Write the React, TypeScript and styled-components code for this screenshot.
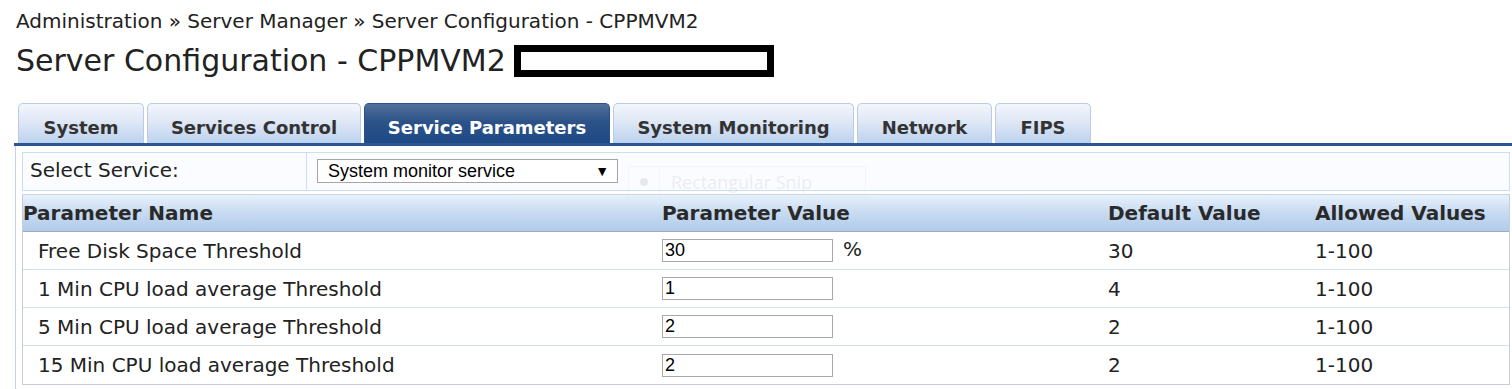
import React from "react";
import styled, { createGlobalStyle } from "styled-components";

const GlobalStyle = createGlobalStyle`
  html, body {
    margin: 0;
    padding: 0;
    background: #ffffff;
  }
  body {
    font-family: "DejaVu Sans", Verdana, sans-serif;
    color: #222222;
    overflow: hidden;
  }
`;

const Page = styled.div`
  width: 1512px;
  height: 389px;
  padding: 8px 0 0 16px;
  box-sizing: border-box;
  position: relative;
`;

const Breadcrumb = styled.div`
  font-size: 20px;
  line-height: 26px;
  color: #222;
`;

const TitleRow = styled.div`
  display: flex;
  align-items: flex-start;
  gap: 8px;
  margin-top: 9px;
  height: 36px;
`;

const Title = styled.h1`
  margin: 0;
  font-size: 30px;
  font-weight: normal;
  color: #222;
  line-height: 36px;
`;

const Redacted = styled.div`
  width: 246px;
  height: 18px;
  border: 7px solid #000;
  background: #fff;
  margin-top: 2px;
`;

const TabBar = styled.div`
  display: flex;
  gap: 3px;
  margin-top: 24px;
  margin-left: -2px;
  padding-left: 4px;
  height: 40px;
  align-items: flex-end;
  border-bottom: 3px solid #2a5592;
`;

const Tab = styled.div<{ $active?: boolean; $w: number }>`
  width: ${(p) => p.$w}px;
  height: 40px;
  box-sizing: border-box;
  border: 1px solid ${(p) => (p.$active ? "#2a5288" : "#bccbe0")};
  border-bottom: none;
  border-radius: 5px 5px 0 0;
  background: ${(p) =>
    p.$active
      ? "linear-gradient(#51719c 0%, #2c5288 45%, #1e4a86 100%)"
      : "linear-gradient(#f3f6fc 0%, #dfe8f6 45%, #bcd2ee 100%)"};
  color: ${(p) => (p.$active ? "#ffffff" : "#333333")};
  font-weight: bold;
  font-size: 18px;
  display: flex;
  align-items: flex-end;
  justify-content: center;
  padding-bottom: 5px;
`;

const Panel = styled.div`
  margin-left: -1px;
  border-left: 1px solid #c5d2e6;
  padding: 6px 0 0 6px;
  height: 260px;
  box-sizing: border-box;
`;

const SelectRow = styled.div`
  display: grid;
  grid-template-columns: 284px 1fr;
  height: 39px;
  box-sizing: border-box;
  border: 1px solid #cddcf4;
  background: #fafcff;
  width: 1488px;
`;

const SelectLabel = styled.div`
  font-size: 20px;
  line-height: 24px;
  padding: 5px 0 0 7px;
  border-right: 1px solid #cddcf4;
  color: #222;
`;

const SelectCell = styled.div`
  padding: 6px 0 0 10px;
`;

const FakeSelect = styled.div`
  width: 301px;
  height: 24px;
  box-sizing: border-box;
  border: 1px solid #a5a5a5;
  background: #fff;
  font-family: "Liberation Sans", Arial, sans-serif;
  font-size: 18px;
  color: #000;
  display: flex;
  align-items: center;
  justify-content: space-between;
  padding: 0 8px 0 10px;
`;

const Arrow = styled.span`
  font-size: 14px;
`;

const Ghost = styled.div`
  position: absolute;
  left: 628px;
  top: 166px;
  width: 236px;
  height: 30px;
  border: 1px solid rgba(225, 228, 236, 0.3);
  display: flex;
  align-items: center;
  color: rgba(205, 208, 216, 0.35);
  font-family: "Open Sans", sans-serif;
  font-size: 18px;
  pointer-events: none;
`;

const GhostDot = styled.span`
  width: 30px;
  height: 28px;
  border-right: 1px solid rgba(225, 228, 236, 0.3);
  display: flex;
  align-items: center;
  justify-content: center;
  margin-right: 11px;
  &::after {
    content: "";
    width: 8px;
    height: 8px;
    border-radius: 50%;
    background: rgba(205, 208, 216, 0.45);
  }
`;

const Table = styled.div`
  margin-top: 3px;
  width: 1488px;
  box-sizing: border-box;
  border: 1px solid #c8ccd4;
  border-top: none;
`;

const cols = "639px 446px 207px 1fr";

const HeaderRow = styled.div`
  display: grid;
  grid-template-columns: ${cols};
  height: 38px;
  box-sizing: border-box;
  align-items: center;
  background: linear-gradient(#e8f1fc 0%, #c9dcf2 45%, #b1cbea 100%);
  border-bottom: 1px solid #9eabbd;
  border-top: 1px solid #c9d5e6;
  font-weight: bold;
  font-size: 20px;
  color: #2a2a2a;
`;

const Row = styled.div<{ $last?: boolean }>`
  display: grid;
  grid-template-columns: ${cols};
  height: 38px;
  box-sizing: border-box;
  align-items: center;
  border-bottom: ${(p) => (p.$last ? "none" : "1px solid #d3def0")};
  font-size: 20px;
  color: #222;
`;

const NameCell = styled.div`
  padding-left: 15px;
`;

const ValueCell = styled.div`
  display: flex;
  align-items: center;
  gap: 10px;
`;

const Input = styled.div`
  width: 171px;
  height: 23px;
  box-sizing: border-box;
  border: 1px solid #a9a9a9;
  font-family: "Liberation Sans", Arial, sans-serif;
  font-size: 18px;
  color: #000;
  padding-left: 2px;
  line-height: 21px;
`;

const Unit = styled.span`
  font-size: 20px;
  margin-top: -4px;
`;

const tabs = [
  { label: "System", w: 126 },
  { label: "Services Control", w: 214 },
  { label: "Service Parameters", w: 246, active: true },
  { label: "System Monitoring", w: 241 },
  { label: "Network", w: 135 },
  { label: "FIPS", w: 96 },
];

const params = [
  { name: "Free Disk Space Threshold", value: "30", unit: "%", def: "30", allowed: "1-100" },
  { name: "1 Min CPU load average Threshold", value: "1", def: "4", allowed: "1-100" },
  { name: "5 Min CPU load average Threshold", value: "2", def: "2", allowed: "1-100" },
  { name: "15 Min CPU load average Threshold", value: "2", def: "2", allowed: "1-100" },
];

export default function App() {
  return (
    <>
      <GlobalStyle />
      <Page>
        <Breadcrumb>Administration » Server Manager » Server Configuration - CPPMVM2</Breadcrumb>
        <TitleRow>
          <Title>Server Configuration - CPPMVM2</Title>
          <Redacted />
        </TitleRow>
        <TabBar>
          {tabs.map((t) => (
            <Tab key={t.label} $w={t.w} $active={t.active}>
              {t.label}
            </Tab>
          ))}
        </TabBar>
        <Panel>
          <SelectRow>
            <SelectLabel>Select Service:</SelectLabel>
            <SelectCell>
              <FakeSelect>
                System monitor service
                <Arrow>▼</Arrow>
              </FakeSelect>
            </SelectCell>
          </SelectRow>
          <Table>
            <HeaderRow>
              <div>Parameter Name</div>
              <div>Parameter Value</div>
              <div>Default Value</div>
              <div>Allowed Values</div>
            </HeaderRow>
            {params.map((p, i) => (
              <Row key={p.name} $last={i === params.length - 1}>
                <NameCell>{p.name}</NameCell>
                <ValueCell>
                  <Input>{p.value}</Input>
                  {p.unit && <Unit>{p.unit}</Unit>}
                </ValueCell>
                <div>{p.def}</div>
                <div>{p.allowed}</div>
              </Row>
            ))}
          </Table>
        </Panel>
        <Ghost>
          <GhostDot />
          Rectangular Snip
        </Ghost>
      </Page>
    </>
  );
}
